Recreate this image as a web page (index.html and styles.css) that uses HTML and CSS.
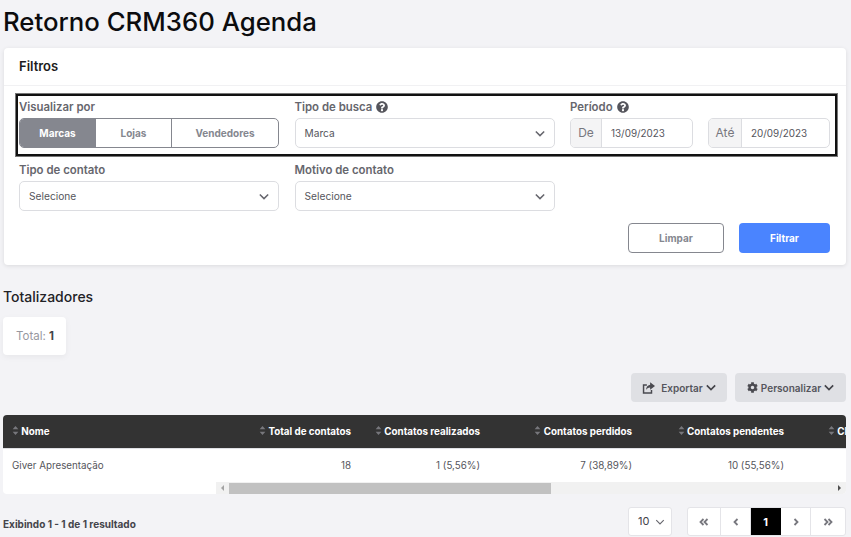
FILE: index.html
```html
<!DOCTYPE html>
<html lang="pt-BR">
<head>
    <meta charset="UTF-8">
    <title>Retorno CRM360 Agenda</title>
    <link rel="stylesheet" href="styles.css">
</head>
<body>
    <h1 class="page-title">Retorno CRM360 Agenda</h1>

    <section class="card">
        <div class="card-header">Filtros</div>
        <div class="card-body">
            <div class="highlight"></div>
            <div class="filter-grid">
                <div class="field">
                    <label>Visualizar por</label>
                    <div class="segmented">
                        <span class="segment active">Marcas</span>
                        <span class="segment">Lojas</span>
                        <span class="segment wide">Vendedores</span>
                    </div>
                </div>
                <div class="field">
                    <label>Tipo de busca
                        <svg class="help" viewBox="0 0 512 512"><path d="M504 256c0 137-111 248-248 248S8 393 8 256 119 8 256 8s248 111 248 248zM263 90c-54 0-89 23-116 63-4 5-3 12 3 16l35 26c5 4 13 3 17-2 18-23 30-36 58-36 21 0 47 13 47 34 0 15-13 23-34 35-25 14-57 31-57 74v6c0 7 5 12 12 12h56c7 0 12-5 12-12v-2c0-29 86-31 86-111 0-60-62-103-119-103zm-7 256c-25 0-46 21-46 46s21 46 46 46 46-21 46-46-21-46-46-46z"/></svg>
                    </label>
                    <div class="select">Marca
                        <svg class="chevron" viewBox="0 0 12 8"><path d="M1 1.500l5 5 5-5"/></svg>
                    </div>
                </div>
                <div class="field">
                    <label>Período
                        <svg class="help" viewBox="0 0 512 512"><path d="M504 256c0 137-111 248-248 248S8 393 8 256 119 8 256 8s248 111 248 248zM263 90c-54 0-89 23-116 63-4 5-3 12 3 16l35 26c5 4 13 3 17-2 18-23 30-36 58-36 21 0 47 13 47 34 0 15-13 23-34 35-25 14-57 31-57 74v6c0 7 5 12 12 12h56c7 0 12-5 12-12v-2c0-29 86-31 86-111 0-60-62-103-119-103zm-7 256c-25 0-46 21-46 46s21 46 46 46 46-21 46-46-21-46-46-46z"/></svg>
                    </label>
                    <div class="dates">
                        <div class="date-group from">
                            <span class="date-addon">De</span>
                            <span class="date-value">13/09/2023</span>
                        </div>
                        <div class="date-group to">
                            <span class="date-addon">Até</span>
                            <span class="date-value">20/09/2023</span>
                        </div>
                    </div>
                </div>
                <div class="field">
                    <label>Tipo de contato</label>
                    <div class="select">Selecione
                        <svg class="chevron" viewBox="0 0 12 8"><path d="M1 1.500l5 5 5-5"/></svg>
                    </div>
                </div>
                <div class="field">
                    <label>Motivo de contato</label>
                    <div class="select">Selecione
                        <svg class="chevron" viewBox="0 0 12 8"><path d="M1 1.500l5 5 5-5"/></svg>
                    </div>
                </div>
            </div>
            <div class="filter-actions">
                <button class="btn btn-clear">Limpar</button>
                <button class="btn btn-primary">Filtrar</button>
            </div>
        </div>
    </section>

    <h2 class="section-title">Totalizadores</h2>
    <div class="total-card">Total: <b>1</b></div>

    <div class="toolbar">
        <button class="btn-tool export">
            <svg class="tool-icon" viewBox="0 0 16 14"><path d="M1 2.500h5v1.800H2.800v7.900h8V9.500h1.800V14H1z"/><path d="M10 0l6 4.500L10 9V6.300C7.500 6.300 6 7.300 5 9.500c0-3.500 1.500-6 5-6.600z"/></svg>
            Exportar
            <svg class="tool-chevron" viewBox="0 0 12 8"><path d="M1 1.500l5 5 5-5"/></svg>
        </button>
        <button class="btn-tool custom">
            <svg class="tool-icon gear" viewBox="0 0 512 512"><path d="M487 316l-42-25c4-23 4-47 0-70l42-25c5-3 7-9 5-14-11-35-30-67-54-93-4-4-10-5-15-2l-42 25c-18-15-38-27-61-35V28c0-6-4-11-9-12-37-8-74-8-109 0-5 1-9 6-9 12v49c-22 8-43 20-61 35L90 87c-5-3-11-2-15 2-24 26-43 58-54 93-2 5 0 11 5 14l42 25c-4 23-4 47 0 70l-42 25c-5 3-7 9-5 14 11 35 30 67 54 93 4 4 10 5 15 2l42-25c18 15 39 27 61 35v49c0 6 4 11 9 12 37 8 74 8 109 0 5-1 9-6 9-12v-49c23-8 43-20 61-35l42 25c5 3 11 2 15-2 24-26 43-58 54-93 2-5 0-11-5-14zM256 336c-44 0-80-36-80-80s36-80 80-80 80 36 80 80-36 80-80 80z"/></svg>
            Personalizar
            <svg class="tool-chevron" viewBox="0 0 12 8"><path d="M1 1.500l5 5 5-5"/></svg>
        </button>
    </div>

    <div class="table-wrap">
        <table class="data-table">
            <thead>
                <tr>
                    <th class="col-name"><svg class="sort" viewBox="0 0 8 11"><path d="M4 0l3.500 4H.5zM4 11L.5 7h7z"/></svg> Nome</th>
                    <th class="col-total"><svg class="sort" viewBox="0 0 8 11"><path d="M4 0l3.500 4H.5zM4 11L.5 7h7z"/></svg> Total de contatos</th>
                    <th class="col-done"><svg class="sort" viewBox="0 0 8 11"><path d="M4 0l3.500 4H.5zM4 11L.5 7h7z"/></svg> Contatos realizados</th>
                    <th class="col-lost"><svg class="sort" viewBox="0 0 8 11"><path d="M4 0l3.500 4H.5zM4 11L.5 7h7z"/></svg> Contatos perdidos</th>
                    <th class="col-pending"><svg class="sort" viewBox="0 0 8 11"><path d="M4 0l3.500 4H.5zM4 11L.5 7h7z"/></svg> Contatos pendentes</th>
                    <th class="col-extra"><svg class="sort" viewBox="0 0 8 11"><path d="M4 0l3.500 4H.5zM4 11L.5 7h7z"/></svg> Cl</th>
                </tr>
            </thead>
            <tbody>
                <tr>
                    <td class="col-name">Giver Apresentação</td>
                    <td>18</td>
                    <td>1 (5,56%)</td>
                    <td>7 (38,89%)</td>
                    <td>10 (55,56%)</td>
                    <td></td>
                </tr>
            </tbody>
        </table>
        <div class="scrollbar">
            <span class="arrow-left"></span>
            <div class="scroll-track"><div class="scroll-thumb"></div></div>
            <span class="arrow-right"></span>
        </div>
    </div>

    <div class="table-footer">
        <div class="result-count">Exibindo 1 - 1 de 1 resultado</div>
        <div class="page-size">10
            <svg class="size-chevron" viewBox="0 0 12 8"><path d="M1 1.500l5 5 5-5"/></svg>
        </div>
        <div class="pager">
            <span class="page-item first"><svg class="page-icon double" viewBox="0 0 10 8"><path d="M4.500 1L1.500 4l3 3M8.500 1l-3 3 3 3"/></svg></span>
            <span class="page-item"><svg class="page-icon" viewBox="0 0 6 8"><path d="M4.500 1L1.500 4l3 3"/></svg></span>
            <span class="page-item current">1</span>
            <span class="page-item"><svg class="page-icon" viewBox="0 0 6 8"><path d="M1.500 1l3 3-3 3"/></svg></span>
            <span class="page-item last"><svg class="page-icon double" viewBox="0 0 10 8"><path d="M1.500 1l3 3-3 3M5.500 1l3 3-3 3"/></svg></span>
        </div>
    </div>
</body>
</html>
```

FILE: styles.css
```css
html, body {
    margin: 0;
    height: 537px;
    overflow: hidden;
}
body {
    padding: 0 5px 0 4px;
    box-sizing: border-box;
    font-family: Inter, "Open Sans", sans-serif;
    background-color: #f3f3f6;
    color: #66666d;
}
.page-title {
    margin: 0 0 0 -1px;
    height: 48px;
    line-height: 44px;
    font-size: 25.750px;
    font-weight: 500;
    color: #0c0c0e;
}
.card {
    height: 217px;
    background: white;
    border-radius: 4px;
    box-shadow: 0 1px 4px rgba(0,0,0,0.1);
}
.card-header {
    height: 37px;
    line-height: 37px;
    padding-left: 15px;
    font-size: 13px;
    font-weight: 600;
    color: #1c1c20;
    border-bottom: 1px solid #f1f1f3;
}
.card-body {
    position: relative;
    padding: 12px 16px 0 15px;
}
/* marca preta desenhada por cima dos filtros */
.highlight {
    position: absolute;
    left: 11px;
    right: 8px;
    top: 7px;
    height: 58px;
    border: 3px solid #111;
    outline: 1px solid #777;
    outline-offset: -1px;
}
.filter-grid {
    display: grid;
    grid-template-columns: repeat(3, 260px);
    column-gap: 15.500px;
    row-gap: 13px;
}
.field label {
    display: flex;
    align-items: center;
    gap: 4px;
    height: 17px;
    margin-bottom: 3px;
    font-size: 11.400px;
    font-weight: 600;
    color: #66666d;
}
.help {
    width: 12px;
    height: 12px;
    fill: #55555c;
}
.segmented {
    display: flex;
    height: 30px;
    box-sizing: border-box;
    border: 1px solid #85878f;
    border-radius: 5px;
    overflow: hidden;
}
.segment {
    flex: 0 0 75px;
    line-height: 28px;
    text-align: center;
    font-size: 10px;
    font-weight: 700;
    color: #85878f;
    border-right: 1px solid #85878f;
}
.segment.active {
    background: #85878f;
    color: white;
}
.segment.wide {
    flex: 1;
    border-right: none;
}
.select {
    position: relative;
    height: 30px;
    box-sizing: border-box;
    padding-left: 9px;
    line-height: 28px;
    font-size: 10.200px;
    color: #55555c;
    border: 1px solid #dcdde1;
    border-radius: 5px;
    background: white;
}
.chevron {
    position: absolute;
    right: 9px;
    top: 11px;
    width: 10px;
    height: 7px;
    fill: none;
    stroke: #66666d;
    stroke-width: 1.800;
}
.dates {
    display: flex;
    justify-content: space-between;
}
.date-group {
    display: flex;
    height: 30px;
    box-sizing: border-box;
    border: 1px solid #dcdde1;
    border-radius: 5px;
    overflow: hidden;
}
.date-group.from {
    width: 123px;
}
.date-group.to {
    width: 122px;
}
.date-addon {
    line-height: 28px;
    text-align: center;
    font-size: 12px;
    color: #77777e;
    background: #f4f4f5;
    border-right: 1px solid #dcdde1;
}
.from .date-addon {
    width: 30px;
}
.to .date-addon {
    width: 32px;
}
.date-value {
    padding-left: 9px;
    line-height: 28px;
    font-size: 9.900px;
    color: #55555c;
}
.filter-actions {
    display: flex;
    justify-content: flex-end;
    gap: 15px;
    margin-top: 12px;
}
.btn {
    height: 30px;
    box-sizing: border-box;
    border-radius: 4px;
    font-family: inherit;
    font-size: 10px;
    font-weight: 700;
}
.btn-clear {
    width: 96px;
    background: white;
    color: #85878f;
    border: 1px solid #85878f;
}
.btn-primary {
    width: 91px;
    background: #4a84ff;
    color: white;
    border: none;
}
.section-title {
    margin: 22px 0 0 -1px;
    height: 20px;
    line-height: 20px;
    font-size: 14px;
    font-weight: 500;
    color: #222226;
}
.total-card {
    width: 63px;
    height: 38px;
    margin: 10px 0 0 -1px;
    box-sizing: border-box;
    padding-left: 13px;
    line-height: 38px;
    font-size: 11.500px;
    color: #98989f;
    background: white;
    border-radius: 4px;
    box-shadow: 0 2px 6px rgba(0,0,0,0.05);
}
.total-card b {
    color: #44444a;
}
.toolbar {
    display: flex;
    justify-content: flex-end;
    gap: 8px;
    margin-top: 18px;
}
.btn-tool {
    display: flex;
    align-items: center;
    justify-content: center;
    height: 29px;
    padding: 0;
    border: none;
    border-radius: 4px;
    background: #dfe0e4;
    font-family: inherit;
    font-size: 10px;
    font-weight: 600;
    color: #55555c;
}
.btn-tool.export {
    width: 96px;
}
.btn-tool.custom {
    width: 111px;
}
.tool-icon {
    width: 13px;
    height: 12px;
    fill: #4a4a50;
    margin-right: 6px;
}
.tool-icon.gear {
    width: 11px;
    height: 11px;
    margin-right: 3px;
}
.tool-chevron {
    width: 10px;
    height: 7px;
    margin-left: 3px;
    fill: none;
    stroke: #44444a;
    stroke-width: 2;
}
.table-wrap {
    width: 843px;
    height: 79px;
    margin: 13px 0 0 -1px;
    background: white;
    border-radius: 4px;
    overflow: hidden;
}
.data-table {
    table-layout: fixed;
    width: 843px;
    border-collapse: collapse;
    font-size: 9.800px;
}
.data-table th {
    height: 33px;
    padding: 0 9px 0 0;
    text-align: right;
    white-space: nowrap;
    overflow: hidden;
    font-weight: 700;
    color: white;
    background: #333;
    border-bottom: 1px solid #dfe0e4;
    box-sizing: border-box;
}
.data-table td {
    height: 34px;
    padding: 0 9px 0 0;
    text-align: right;
    color: #55555c;
    box-sizing: border-box;
}
.data-table .col-name {
    width: 228px;
    padding-left: 9px;
    text-align: left;
}
.col-total,
.col-done {
    width: 129px;
}
.col-lost,
.col-pending {
    width: 152px;
}
.data-table .col-extra {
    width: 53px;
    padding: 0 0 0 35px;
    text-align: left;
}
.sort {
    width: 7px;
    height: 9px;
    fill: #77777c;
}
.scrollbar {
    display: flex;
    align-items: center;
    height: 12px;
    margin-left: 213px;
    background: #f1f1f1;
}
.scroll-track {
    flex: 1;
    height: 11px;
}
.scroll-thumb {
    width: 322px;
    height: 11px;
    background: #c1c1c1;
}
.arrow-left,
.arrow-right {
    flex: none;
    width: 0;
    height: 0;
    border-top: 3px solid transparent;
    border-bottom: 3px solid transparent;
}
.arrow-left {
    border-right: 3px solid #a3a3a3;
    margin: 0 5px;
}
.arrow-right {
    border-left: 3px solid #505050;
    margin: 0 5px;
}
.table-footer {
    display: flex;
    align-items: center;
    margin: 13px 0 0 -1px;
}
.result-count {
    flex: 1;
    padding-top: 5px;
    font-size: 10px;
    font-weight: 700;
    color: #44444a;
}
.page-size {
    width: 44px;
    height: 29px;
    box-sizing: border-box;
    padding-left: 9px;
    line-height: 27px;
    font-size: 11px;
    color: #44444a;
    background: white;
    border: 1px solid #e4e4e8;
    border-radius: 3px;
    margin-right: 15px;
}
.size-chevron {
    width: 10px;
    height: 6px;
    margin-left: 2px;
    fill: none;
    stroke: #66666d;
    stroke-width: 1.500;
}
.pager {
    display: flex;
    height: 29px;
    background: white;
    border: 1px solid #e4e4e8;
    border-radius: 3px;
    box-sizing: border-box;
}
.page-item {
    display: flex;
    align-items: center;
    justify-content: center;
    width: 29px;
    font-size: 11px;
    font-weight: 700;
    border-right: 1px solid #e4e4e8;
}
.page-item.first {
    width: 32px;
}
.page-item.last {
    width: 34px;
    border-right: none;
}
.page-item.current {
    color: white;
    background: black;
    border-right-color: black;
}
.page-icon {
    width: 6px;
    height: 8px;
    fill: none;
    stroke: #77777e;
    stroke-width: 1.800;
}
.page-icon.double {
    width: 10px;
}
```
